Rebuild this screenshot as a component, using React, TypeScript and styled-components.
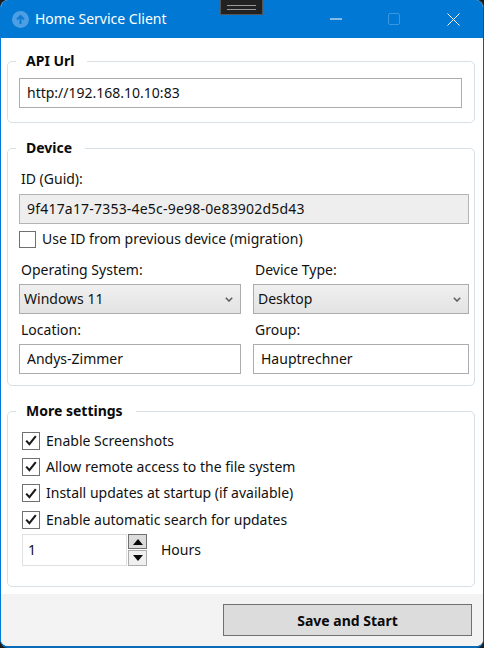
import styled, { createGlobalStyle } from "styled-components";

const GlobalStyle = createGlobalStyle`
  html, body {
    margin: 0;
    padding: 0;
    background: #1c1c1c;
  }
  * {
    box-sizing: border-box;
  }
`;

const Window = styled.div`
  position: relative;
  display: flex;
  flex-direction: column;
  width: 484px;
  height: 648px;
  overflow: hidden;
  background: #fff;
  border-left: 1px solid #0078d4;
  border-right: 1px solid #3c4a55;
  border-bottom: 2px solid #0a6cb8;
  border-radius: 8px;
  font-family: "Noto Sans", "Open Sans", sans-serif;
  font-size: 14px;
  color: #111;
`;

const TitleBar = styled.div`
  display: flex;
  align-items: center;
  flex: none;
  height: 38px;
  margin-left: -1px;
  margin-right: -1px;
  padding-left: 12px;
  background: #0078d4;
  color: #fff;
`;

const AppIcon = styled.svg`
  flex: none;
  width: 17px;
  height: 17px;
`;

const Title = styled.span`
  margin-left: 6px;
  font-size: 14px;
  line-height: 20px;
`;

const WindowControls = styled.div`
  display: flex;
  align-items: center;
  margin-left: auto;
  height: 100%;
`;

const ControlButton = styled.div<{ $width: number }>`
  display: flex;
  align-items: center;
  justify-content: center;
  width: ${(p) => p.$width}px;
  height: 100%;
`;

const RemoteHandle = styled.div`
  position: absolute;
  top: -1px;
  left: 219px;
  display: flex;
  flex-direction: column;
  justify-content: center;
  gap: 3px;
  width: 43px;
  height: 16px;
  padding: 0 6px;
  background: #222;
  border: 1px solid #555;
`;

const HandleLine = styled.div`
  height: 1px;
  background: #9a9a9a;
`;

const Content = styled.main`
  display: flex;
  flex: 1;
  flex-direction: column;
  gap: 15px;
  padding: 13px 8px 0 6px;
`;

const Group = styled.fieldset<{ $bottom: number }>`
  min-width: 0;
  margin: 0;
  padding: 0 5px ${(p) => p.$bottom}px 11px;
  border: 1px solid #d7e0e7;
  border-radius: 5px;
`;

const Legend = styled.legend`
  margin-left: -3px;
  padding: 0 13px 0 10px;
  font-size: 14px;
  font-weight: 700;
  line-height: 20px;
  color: #0a0a0a;
`;

const Field = styled.div`
  display: flex;
  align-items: center;
  height: 30px;
  padding-left: 7px;
  background: #fff;
  border: 1px solid #ababb0;
  line-height: 20px;
  white-space: nowrap;
`;

const ApiField = styled(Field)`
  margin-top: 7px;
  margin-right: 7px;
`;

const GuidField = styled(Field)`
  background: #eeeeee;
  border-color: #b4b4b4;
  letter-spacing: 0.2px;
`;

const FieldLabel = styled.div<{ $top?: number; $bottom?: number }>`
  height: 20px;
  margin-top: ${(p) => p.$top ?? 0}px;
  margin-bottom: ${(p) => p.$bottom ?? 4}px;
  padding-left: 2px;
  line-height: 20px;
  white-space: nowrap;
`;

const DeviceGrid = styled.div`
  display: grid;
  grid-template-columns: 222px 216px;
  column-gap: 12px;
  row-gap: 6px;
  margin-top: 8px;
`;

const Select = styled.div`
  display: flex;
  align-items: center;
  justify-content: space-between;
  height: 30px;
  padding: 0 7px 0 4px;
  background: linear-gradient(#f0f0f0, #e3e3e3);
  border: 1px solid #acacac;
  line-height: 20px;
`;

const CheckRow = styled.div<{ $top?: number }>`
  display: flex;
  align-items: center;
  gap: 6px;
  height: 26.4px;
  margin-top: ${(p) => p.$top ?? 0}px;
  line-height: 20px;
  white-space: nowrap;
`;

const CheckBox = styled.span<{ $size: number }>`
  display: flex;
  align-items: center;
  justify-content: center;
  flex: none;
  width: ${(p) => p.$size}px;
  height: ${(p) => p.$size}px;
  background: #fff;
  border: 1px solid #707070;
`;

const SettingsList = styled.div`
  display: flex;
  flex-direction: column;
  margin-top: 6px;
  padding-left: 3px;
`;

const SpinRow = styled.div`
  display: flex;
  align-items: center;
  height: 32px;
  margin-top: 1px;
`;

const SpinInput = styled.div`
  display: flex;
  align-items: center;
  width: 105px;
  height: 100%;
  padding-left: 5px;
  background: #fff;
  border: 1.5px solid #e0e0e0;
`;

const SpinButtons = styled.div`
  display: flex;
  flex-direction: column;
  gap: 1px;
  width: 19px;
  height: 100%;
  margin-left: 1px;
`;

const SpinButton = styled.div<{ $up?: boolean }>`
  display: flex;
  align-items: center;
  justify-content: center;
  flex: 1;
  background: ${(p) => (p.$up ? "#dcdcdc" : "#f0f0f0")};
  border: 1px solid ${(p) => (p.$up ? "#707070" : "#adadad")};
`;

const SpinUnit = styled.span`
  margin-left: 14px;
`;

const Footer = styled.footer`
  display: flex;
  flex: none;
  justify-content: flex-end;
  height: 52px;
  padding: 10px 11px 0 0;
  background: #f3f3f3;
`;

const PrimaryButton = styled.button`
  width: 249px;
  height: 32px;
  padding: 0;
  background: #dcdcdc;
  border: 1px solid #707070;
  border-radius: 0;
  color: #0a0a0a;
  font-family: inherit;
  font-size: 14px;
  font-weight: 700;
`;

const Chevron = () => (
  <svg width="8" height="5" viewBox="0 0 8 5" fill="none">
    <path d="M0.8 0.8L4 4l3.2-3.2" stroke="#606060" strokeWidth="1.6" />
  </svg>
);

const Check = () => (
  <svg width="12" height="11" viewBox="0 0 12 11" fill="none">
    <path d="M1.2 5.6L4.4 9.2 10.8 1.2" stroke="#1a1a1a" strokeWidth="2.1" />
  </svg>
);

const settings = [
  "Enable Screenshots",
  "Allow remote access to the file system",
  "Install updates at startup (if available)",
  "Enable automatic search for updates",
];

export default function App() {
  return (
    <>
      <GlobalStyle />
      <Window>
        <TitleBar>
          <AppIcon viewBox="0 0 17 17">
            <circle cx="8.5" cy="8.5" r="8.5" fill="#4d9fe3" />
            <path d="M8.5 13V5M5 8.5l3.5-3.5L12 8.5" fill="none" stroke="#0f7ad2" strokeWidth="2" />
          </AppIcon>
          <Title>Home Service Client</Title>
          <WindowControls>
            <ControlButton $width={58}>
              <svg width="12" height="2" viewBox="0 0 12 2">
                <path d="M0 1h12" stroke="#fff" strokeWidth="1" />
              </svg>
            </ControlButton>
            <ControlButton $width={58}>
              <svg width="12" height="12" viewBox="0 0 12 12">
                <rect x="0.5" y="0.5" width="11" height="11" rx="1.5" fill="none" stroke="#3b97e0" />
              </svg>
            </ControlButton>
            <ControlButton $width={61}>
              <svg width="13" height="13" viewBox="0 0 13 13">
                <path d="M0.5 0.5l12 12M12.5 0.5l-12 12" stroke="#fff" strokeWidth="1" />
              </svg>
            </ControlButton>
          </WindowControls>
        </TitleBar>
        <RemoteHandle>
          <HandleLine />
          <HandleLine />
        </RemoteHandle>

        <Content>
          <Group $bottom={14}>
            <Legend>API Url</Legend>
            <ApiField>http://192.168.10.10:83</ApiField>
          </Group>

          <Group $bottom={11}>
            <Legend>Device</Legend>
            <FieldLabel $top={11} $bottom={5}>
              ID (Guid):
            </FieldLabel>
            <GuidField>9f417a17-7353-4e5c-9e98-0e83902d5d43</GuidField>
            <CheckRow $top={2}>
              <CheckBox $size={17} />
              Use ID from previous device (migration)
            </CheckRow>
            <DeviceGrid>
              <div>
                <FieldLabel>Operating System:</FieldLabel>
                <Select>
                  Windows 11
                  <Chevron />
                </Select>
              </div>
              <div>
                <FieldLabel>Device Type:</FieldLabel>
                <Select>
                  Desktop
                  <Chevron />
                </Select>
              </div>
              <div>
                <FieldLabel>Location:</FieldLabel>
                <Field>Andys-Zimmer</Field>
              </div>
              <div>
                <FieldLabel>Group:</FieldLabel>
                <Field>Hauptrechner</Field>
              </div>
            </DeviceGrid>
          </Group>

          <Group $bottom={20}>
            <Legend>More settings</Legend>
            <SettingsList>
              {settings.map((label) => (
                <CheckRow key={label}>
                  <CheckBox $size={18}>
                    <Check />
                  </CheckBox>
                  {label}
                </CheckRow>
              ))}
              <SpinRow>
                <SpinInput>1</SpinInput>
                <SpinButtons>
                  <SpinButton $up>
                    <svg width="10" height="6" viewBox="0 0 10 6">
                      <path d="M5 0l5 6H0z" fill="#0a0a0a" />
                    </svg>
                  </SpinButton>
                  <SpinButton>
                    <svg width="10" height="6" viewBox="0 0 10 6">
                      <path d="M0 0h10L5 6z" fill="#0a0a0a" />
                    </svg>
                  </SpinButton>
                </SpinButtons>
                <SpinUnit>Hours</SpinUnit>
              </SpinRow>
            </SettingsList>
          </Group>
        </Content>

        <Footer>
          <PrimaryButton>Save and Start</PrimaryButton>
        </Footer>
      </Window>
    </>
  );
}
